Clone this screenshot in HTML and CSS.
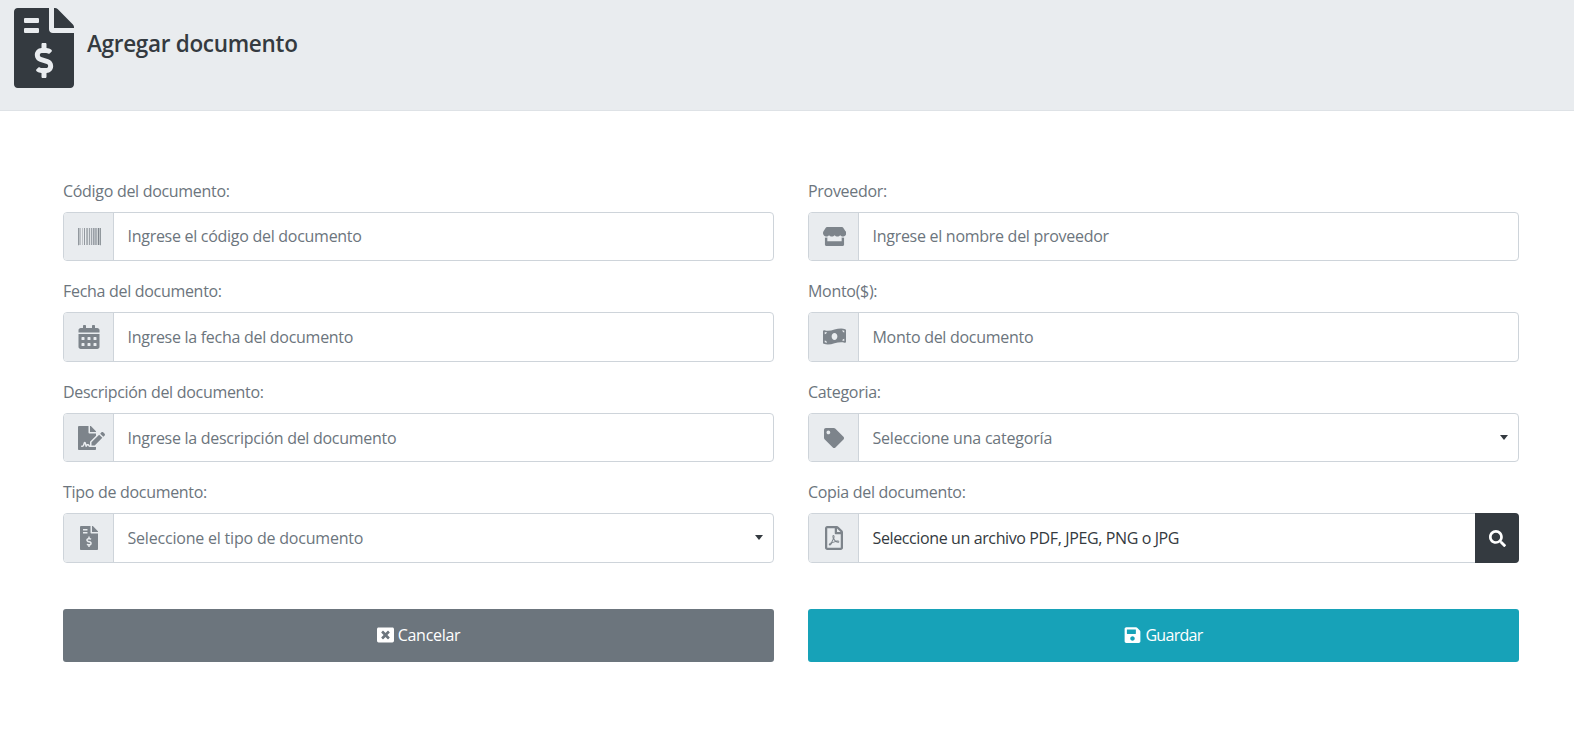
FILE: index.html
```html
<!DOCTYPE html>
<html lang="es">
<head>
  <meta charset="UTF-8" />
  <title>Agregar documento</title>
  <link rel="stylesheet" href="styles.css">
</head>
<body>

  <svg width="0" height="0" class="defs">
    <symbol id="i-invoice" viewBox="0 0 384 512"><path d="M377 105L279.1 7c-4.5-4.5-10.6-7-17-7H256v128h128v-6.1c0-6.3-2.5-12.4-7-16.9zm-153 31V0H24C10.7 0 0 10.7 0 24v464c0 13.3 10.7 24 24 24h336c13.3 0 24-10.7 24-24V160H248c-13.2 0-24-10.8-24-24zM64 72c0-4.42 3.58-8 8-8h80c4.42 0 8 3.58 8 8v16c0 4.42-3.58 8-8 8H72c-4.42 0-8-3.58-8-8V72zm0 80v-16c0-4.42 3.58-8 8-8h80c4.42 0 8 3.58 8 8v16c0 4.42-3.58 8-8 8H72c-4.42 0-8-3.58-8-8zm144 263.88V440c0 4.42-3.58 8-8 8h-16c-4.42 0-8-3.58-8-8v-24.29c-11.29-.58-22.27-4.52-31.37-11.35-3.9-2.93-4.1-8.77-.57-12.14l11.75-11.21c2.77-2.64 6.89-2.76 10.13-.73 3.87 2.42 8.26 3.72 12.82 3.72h28.11c6.5 0 11.8-5.92 11.8-13.19 0-5.95-3.61-11.19-8.77-12.73l-45-13.5c-18.59-5.58-31.58-23.42-31.58-43.39 0-24.52 19.05-44.44 42.67-45.07V232c0-4.42 3.58-8 8-8h16c4.42 0 8 3.58 8 8v24.29c11.29.58 22.27 4.51 31.37 11.35 3.9 2.93 4.1 8.77.57 12.14l-11.75 11.21c-2.77 2.64-6.89 2.76-10.13.73-3.87-2.43-8.26-3.72-12.82-3.72h-28.11c-6.5 0-11.8 5.92-11.8 13.19 0 5.95 3.61 11.19 8.77 12.73l45 13.5c18.59 5.58 31.58 23.42 31.58 43.39 0 24.53-19.05 44.44-42.67 45.07z"/></symbol>
  </svg>

  <header class="page-header">
    <svg class="page-icon"><use href="#i-invoice"/></svg>
    <h1>Agregar documento</h1>
  </header>

  <form class="doc-form">
    <div class="field">
      <label>Código del documento:</label>
      <div class="input-group">
        <span class="addon"><svg class="icon icon-md" viewBox="0 0 512 512"><path d="M0 448V64h18v384H0zm26.857-.273V64H36v383.727h-9.143zm27.143 0V64h8.857v383.727H54zm44.857 0V64h8.857v383.727h-8.857zm36 0V64h17.714v383.727h-17.714zm44.857 0V64h8.857v383.727h-8.857zm18 0V64h8.857v383.727h-8.857zm18 0V64h8.857v383.727h-8.857zm35.715 0V64h18v383.727h-18zm44.857 0V64h18v383.727h-18zm35.999 0V64h18.001v383.727h-18.001zm36.001 0V64h18.001v383.727h-18.001zm26.857 0V64h18v383.727h-18zm45.143 0V64h26.857v383.727h-26.857zm35.714 0V64h9.143v383.727H476zm18 .273V64h18v384h-18z"/></svg></span>
        <input type="text" placeholder="Ingrese el código del documento" />
      </div>
    </div>

    <div class="field">
      <label>Proveedor:</label>
      <div class="input-group">
        <span class="addon"><svg class="icon icon-md" viewBox="0 0 616 512"><path d="M602 118.6L537.1 15C531.3 5.7 521 0 510 0H106C95 0 84.7 5.7 78.9 15L14 118.6c-33.9 54.1-3.8 129.3 59.6 137.9 4.6.6 9.2.9 13.7.9 29.9 0 56.5-13.2 74.7-33.6 18.2 20.4 44.8 33.6 74.7 33.6 29.9 0 56.5-13.2 74.7-33.6 18.2 20.4 44.8 33.6 74.7 33.6 29.9 0 56.5-13.2 74.7-33.6 18.3 20.4 44.8 33.6 74.7 33.6 4.6 0 9.1-.3 13.7-.9 63.6-8.5 93.7-83.7 59.7-137.9zM529.5 288c-10 0-19.9-1.5-29.5-3.8V384H116v-99.8c-9.6 2.2-19.5 3.8-29.5 3.8-6 0-12.1-.4-18-1.2-5.6-.8-11.1-2.1-16.4-3.6V480c0 17.7 14.3 32 32 32h448c17.7 0 32-14.3 32-32V283.2c-5.4 1.6-10.8 2.9-16.4 3.6-6.1.8-12.1 1.2-18.2 1.2z"/></svg></span>
        <input type="text" placeholder="Ingrese el nombre del proveedor" />
      </div>
    </div>

    <div class="field">
      <label>Fecha del documento:</label>
      <div class="input-group">
        <span class="addon"><svg class="icon" viewBox="0 0 448 512"><path d="M0 464c0 26.5 21.5 48 48 48h352c26.5 0 48-21.5 48-48V192H0v272zm320-196c0-6.6 5.4-12 12-12h40c6.6 0 12 5.4 12 12v40c0 6.6-5.4 12-12 12h-40c-6.6 0-12-5.4-12-12v-40zm0 128c0-6.6 5.4-12 12-12h40c6.6 0 12 5.4 12 12v40c0 6.6-5.4 12-12 12h-40c-6.6 0-12-5.4-12-12v-40zM192 268c0-6.6 5.4-12 12-12h40c6.6 0 12 5.4 12 12v40c0 6.6-5.4 12-12 12h-40c-6.6 0-12-5.4-12-12v-40zm0 128c0-6.6 5.4-12 12-12h40c6.6 0 12 5.4 12 12v40c0 6.6-5.4 12-12 12h-40c-6.6 0-12-5.4-12-12v-40zM64 268c0-6.6 5.4-12 12-12h40c6.6 0 12 5.4 12 12v40c0 6.6-5.4 12-12 12H76c-6.6 0-12-5.4-12-12v-40zm0 128c0-6.6 5.4-12 12-12h40c6.6 0 12 5.4 12 12v40c0 6.6-5.4 12-12 12H76c-6.6 0-12-5.4-12-12v-40zM400 64h-48V16c0-8.8-7.2-16-16-16h-32c-8.8 0-16 7.2-16 16v48H160V16c0-8.8-7.2-16-16-16h-32c-8.8 0-16 7.2-16 16v48H48C21.5 64 0 85.5 0 112v48h448v-48c0-26.5-21.5-48-48-48z"/></svg></span>
        <input type="text" placeholder="Ingrese la fecha del documento" />
      </div>
    </div>

    <div class="field">
      <label>Monto($):</label>
      <div class="input-group">
        <span class="addon"><svg class="icon icon-md" viewBox="0 0 640 512"><path d="M621.16 54.46C582.37 38.19 543.55 32 504.75 32c-123.17-.01-246.33 62.34-369.5 62.34-30.89 0-61.76-3.92-92.65-13.72-3.47-1.1-6.95-1.62-10.35-1.62C15.04 79 0 92.32 0 110.81v317.26c0 12.63 7.23 24.6 18.84 29.46C57.63 473.81 96.45 480 135.25 480c123.17 0 246.34-62.35 369.51-62.35 30.89 0 61.76 3.92 92.65 13.72 3.47 1.1 6.95 1.62 10.35 1.62 17.21 0 32.25-13.32 32.25-31.81V83.93c-.01-12.64-7.24-24.6-18.85-29.47zM48 132.22c20.12 5.04 41.12 7.57 62.72 8.93C104.84 170.54 79 192.69 48 192.69v-60.47zm0 285v-47.78c34.37 0 62.18 27.27 63.71 61.4-22.53-1.81-43.59-6.31-63.71-13.62zM320 352c-44.19 0-80-42.99-80-96 0-53.02 35.82-96 80-96s80 42.98 80 96c0 53.03-35.83 96-80 96zm272 27.78c-17.52-4.39-35.71-6.85-54.32-8.44 5.87-26.08 27.5-45.88 54.32-49.28v57.72zm0-236.11c-30.89-3.91-54.86-29.7-55.81-61.55 19.54 2.17 38.09 6.23 55.81 12.66v48.89z"/></svg></span>
        <input type="text" placeholder="Monto del documento" />
      </div>
    </div>

    <div class="field">
      <label>Descripción del documento:</label>
      <div class="input-group">
        <span class="addon"><svg class="icon icon-wide" viewBox="0 0 576 512"><path d="M218.17 424.14c-2.95-5.92-8.09-6.52-10.17-6.52s-7.22.59-10.02 6.19l-7.67 15.34c-6.37 12.78-25.03 11.37-29.48-2.09L144 386.59l-10.61 31.88c-5.89 17.66-22.38 29.53-41 29.53H80c-8.84 0-16-7.16-16-16s7.16-16 16-16h12.39c4.83 0 9.11-3.08 10.64-7.66l18.19-54.64c3.3-9.81 12.44-16.41 22.78-16.41s19.48 6.59 22.77 16.41l13.88 41.64c19.75-16.19 54.06-9.7 66 14.16 1.89 3.78 5.49 5.95 9.36 6.26v-82.12l128-127.09V160H248c-13.2 0-24-10.8-24-24V0H24C10.7 0 0 10.7 0 24v464c0 13.3 10.7 24 24 24h336c13.3 0 24-10.7 24-24v-40l-128-.11c-16.12-.31-30.58-9.28-37.83-23.75zM384 121.9c0-6.3-2.5-12.4-7-16.9L279.1 7c-4.5-4.5-10.6-7-17-7H256v128h128v-6.1zm-96 225.06V416h68.99l161.68-162.78-67.88-67.88L288 346.96zm280.54-179.63l-31.87-31.87c-9.94-9.94-26.07-9.94-36.01 0l-27.25 27.25 67.88 67.88 27.25-27.25c9.95-9.94 9.95-26.07 0-36.01z"/></svg></span>
        <input type="text" placeholder="Ingrese la descripción del documento" />
      </div>
    </div>

    <div class="field">
      <label>Categoria:</label>
      <div class="input-group">
        <span class="addon"><svg class="icon icon-sm" viewBox="0 0 512 512"><path d="M0 252.118V48C0 21.49 21.49 0 48 0h204.118a48 48 0 0 1 33.941 14.059l211.882 211.882c18.745 18.745 18.745 49.137 0 67.882L293.823 497.941c-18.745 18.745-49.137 18.745-67.882 0L14.059 286.059A48 48 0 0 1 0 252.118zM112 64c-26.51 0-48 21.49-48 48s21.49 48 48 48 48-21.49 48-48-21.49-48-48-48z"/></svg></span>
        <div class="select-wrap">
          <select><option>Seleccione una categoría</option></select>
        </div>
      </div>
    </div>

    <div class="field">
      <label>Tipo de documento:</label>
      <div class="input-group">
        <span class="addon"><svg class="icon"><use href="#i-invoice"/></svg></span>
        <div class="select-wrap">
          <select><option>Seleccione el tipo de documento</option></select>
        </div>
      </div>
    </div>

    <div class="field">
      <label>Copia del documento:</label>
      <div class="input-group">
        <span class="addon"><svg class="icon" viewBox="0 0 384 512"><path d="M369.9 97.9L286 14C277 5 264.8-.1 252.1-.1H48C21.5 0 0 21.5 0 48v416c0 26.5 21.5 48 48 48h288c26.5 0 48-21.5 48-48V131.9c0-12.7-5.1-25-14.1-34zM332.1 128H256V51.9l76.1 76.1zM48 464V48h160v104c0 13.3 10.7 24 24 24h104v288H48zm250.2-143.7c-12.2-12-47-8.7-64.4-6.5-17.2-10.5-28.7-25-36.8-46.3 3.9-16.1 10.1-40.6 5.4-56-4.2-26.2-37.8-23.6-42.6-5.9-4.4 16.1-.4 38.5 7 67.1-10 23.9-24.9 56-35.4 74.4-20 10.3-47 26.2-51 46.2-3.3 15.8 26 55.2 76.1-31.2 22.4-7.4 46.8-16.5 68.4-20.1 18.9 10.2 41 17 55.8 17 25.5 0 28-28.2 17.5-38.7zm-198.1 77.8c5.1-13.7 24.5-29.5 30.4-35-19 30.3-30.4 35.7-30.4 35zm81.6-190.6c7.4 0 6.7 32.1 1.8 40.8-4.4-13.9-4.3-40.8-1.8-40.8zm-24.4 136.6c9.7-16.9 18-37 24.7-54.7 8.3 15.1 18.9 27.2 30.1 35.5-20.8 4.3-38.9 13.1-54.8 19.2zm131.6-5s-5 6-37.3-7.8c35.1-2.6 40.9 5.4 37.3 7.8z"/></svg></span>
        <div class="file-name">Seleccione un archivo PDF, JPEG, PNG o JPG</div>
        <button type="button" class="search-btn"><svg class="search-icon" viewBox="0 0 512 512"><path d="M505 442.7L405.3 343c-4.5-4.5-10.6-7-17-7H372c27.6-35.3 44-79.7 44-128C416 93.1 322.9 0 208 0S0 93.1 0 208s93.1 208 208 208c48.3 0 92.7-16.4 128-44v16.3c0 6.4 2.5 12.5 7 17l99.7 99.7c9.4 9.4 24.6 9.4 33.9 0l28.3-28.3c9.4-9.4 9.4-24.6.1-34zM208 336c-70.7 0-128-57.2-128-128 0-70.7 57.2-128 128-128 70.7 0 128 57.2 128 128 0 70.7-57.2 128-128 128z"/></svg></button>
      </div>
    </div>

    <div class="actions">
      <button type="button" class="btn btn-cancel"><svg class="btn-icon" viewBox="0 0 512 512"><path d="M464 32H48C21.5 32 0 53.5 0 80v352c0 26.5 21.5 48 48 48h416c26.5 0 48-21.5 48-48V80c0-26.5-21.5-48-48-48zm-83.6 290.5c4.8 4.8 4.8 12.6 0 17.4l-40.5 40.5c-4.8 4.8-12.6 4.8-17.4 0L256 313.3l-66.5 67.1c-4.8 4.8-12.6 4.8-17.4 0l-40.5-40.5c-4.8-4.8-4.8-12.6 0-17.4l67.1-66.5-67.1-66.5c-4.8-4.8-4.8-12.6 0-17.4l40.5-40.5c4.8-4.8 12.6-4.8 17.4 0l66.5 67.1 66.5-67.1c4.8-4.8 12.6-4.8 17.4 0l40.5 40.5c4.8 4.8 4.8 12.6 0 17.4L313.3 256l67.1 66.5z"/></svg>Cancelar</button>
      <button type="button" class="btn btn-save"><svg class="btn-icon" viewBox="0 0 448 512"><path d="M433.941 129.941l-83.882-83.882A48 48 0 0 0 316.118 32H48C21.49 32 0 53.49 0 80v352c0 26.51 21.49 48 48 48h352c26.51 0 48-21.49 48-48V163.882a48 48 0 0 0-14.059-33.941zM224 416c-35.346 0-64-28.654-64-64 0-35.346 28.654-64 64-64s64 28.654 64 64c0 35.346-28.654 64-64 64zm96-304.52V212c0 6.627-5.373 12-12 12H76c-6.627 0-12-5.373-12-12V108c0-6.627 5.373-12 12-12h228.52c3.183 0 6.235 1.264 8.485 3.515l3.48 3.48A11.996 11.996 0 0 1 320 111.48z"/></svg>Guardar</button>
    </div>
  </form>

</body>
</html>
```

FILE: styles.css
```css
* {
  box-sizing: border-box;
}
body {
  margin: 0;
  font-family: "Open Sans", Arial, sans-serif;
  font-size: 16px;
  letter-spacing: -0.3px;
  color: #6c757d;
  background: #fff;
}
.defs {
  position: absolute;
}
.page-header {
  display: flex;
  align-items: center;
  height: 111px;
  padding: 0 14px 14px;
  background: #e9ecef;
  border-bottom: 1px solid #dee2e6;
}
.page-icon {
  width: 60px;
  height: 80px;
  fill: #343a40;
}
.page-header h1 {
  margin: 0 0 10px 13px;
  font-size: 22.5px;
  font-weight: 600;
  color: #343a40;
}
.doc-form {
  display: grid;
  grid-template-columns: 711px 711px;
  column-gap: 34px;
  row-gap: 19.1px;
  padding: 68.6px 55px 0 63px;
}
.field label {
  display: block;
  height: 24px;
  line-height: 22px;
  margin-bottom: 8px;
}
.input-group {
  display: flex;
  height: 49.5px;
  border: 1px solid #ced4da;
  border-radius: 4px;
}
.addon {
  flex: none;
  display: flex;
  align-items: center;
  justify-content: center;
  width: 50px;
  padding-left: 1px;
  background: #e9ecef;
  border-right: 1px solid #ced4da;
  border-radius: 3px 0 0 3px;
}
.icon {
  flex: none;
  width: 24px;
  height: 24px;
  fill: #7d848b;
}
.icon-md {
  width: 23px;
  height: 23px;
}
.icon-sm {
  width: 20px;
  height: 20px;
}
.icon-wide {
  width: 27px;
  margin-left: 5px;
}
.input-group input,
.input-group select,
.file-name {
  flex: 1;
  width: 100%;
  height: 100%;
  padding: 0 13.5px;
  border: none;
  outline: none;
  background: transparent;
  font: inherit;
  letter-spacing: -0.28px;
  color: #6c757d;
}
.input-group input::placeholder {
  color: #6c757d;
  opacity: 1;
}
.select-wrap {
  position: relative;
  flex: 1;
}
.select-wrap select {
  appearance: none;
  letter-spacing: -0.2px;
}
.select-wrap::after {
  content: "";
  position: absolute;
  right: 10px;
  top: 21px;
  border-left: 4px solid transparent;
  border-right: 4px solid transparent;
  border-top: 5px solid #343a40;
}
.file-name {
  display: flex;
  align-items: center;
  letter-spacing: -0.38px;
  color: #343a40;
}
.search-btn {
  flex: none;
  display: flex;
  align-items: center;
  justify-content: center;
  width: 44px;
  height: 49.5px;
  margin: -1px -1px -1px 0;
  padding: 0;
  border: none;
  border-radius: 0 4px 4px 0;
  background: #343a40;
}
.search-icon {
  width: 17px;
  height: 17px;
  fill: #fff;
}
.actions {
  grid-column: 1 / 3;
  display: grid;
  grid-template-columns: 711px 711px;
  column-gap: 34px;
  margin-top: 27px;
}
.btn {
  display: flex;
  align-items: center;
  justify-content: center;
  height: 53px;
  border: none;
  border-radius: 3px;
  font: inherit;
  letter-spacing: inherit;
  color: #fff;
}
.btn-cancel {
  background: #6c757d;
}
.btn-save {
  background: #17a2b8;
  letter-spacing: -0.7px;
}
.btn-icon {
  width: 17px;
  height: 18px;
  margin-right: 4px;
  fill: #fff;
}
```
